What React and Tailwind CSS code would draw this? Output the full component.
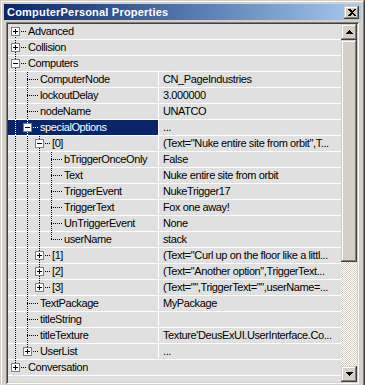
import React from 'react';

const tree = [
  { label: 'Advanced', closed: true },
  { label: 'Collision', closed: true },
  {
    label: 'Computers',
    children: [
      { label: 'ComputerNode', value: 'CN_PageIndustries' },
      { label: 'lockoutDelay', value: '3.000000' },
      { label: 'nodeName', value: 'UNATCO' },
      {
        label: 'specialOptions',
        value: '...',
        selected: true,
        children: [
          {
            label: '[0]',
            value: '(Text="Nuke entire site from orbit",T...',
            children: [
              { label: 'bTriggerOnceOnly', value: 'False' },
              { label: 'Text', value: 'Nuke entire site from orbit' },
              { label: 'TriggerEvent', value: 'NukeTrigger17' },
              { label: 'TriggerText', value: 'Fox one away!' },
              { label: 'UnTriggerEvent', value: 'None' },
              { label: 'userName', value: 'stack' },
            ],
          },
          { label: '[1]', value: '(Text="Curl up on the floor like a littl...', closed: true },
          { label: '[2]', value: '(Text="Another option",TriggerText...', closed: true },
          { label: '[3]', value: '(Text="",TriggerText="",userName=...', closed: true },
        ],
      },
      { label: 'TextPackage', value: 'MyPackage' },
      { label: 'titleString', value: '' },
      { label: 'titleTexture', value: "Texture'DeusExUI.UserInterface.Co..." },
      { label: 'UserList', value: '...', closed: true },
    ],
  },
  { label: 'Conversation', closed: true },
];

const flatten = (nodes, level = 0, cont = [], out = []) => {
  nodes.forEach((node, i) => {
    const hasNext = i < nodes.length - 1;
    out.push({ ...node, level, cont, hasNext });
    if (node.children) flatten(node.children, level + 1, [...cont, hasNext], out);
  });
  return out;
};

const rows = flatten(tree);

const TreeLines = ({ row, first }) => {
  const L = row.level;
  const w = 19 + 12 * L;
  const c = row.selected ? '#ffffff' : '#000000';
  const x = 7 + 12 * L + 0.5;
  const box = row.closed || row.children;

  return (
    <svg width={w} height={15} shapeRendering="crispEdges" className="shrink-0">
      {row.cont.map((on, a) =>
        on ? (
          <line key={a} x1={7 + 12 * a + 0.5} y1={0} x2={7 + 12 * a + 0.5} y2={15} stroke={c} strokeDasharray="1 1" />
        ) : null
      )}
      <line x1={x} y1={first ? 7 : 0} x2={x} y2={row.hasNext ? 15 : 8} stroke={c} strokeDasharray="1 1" />
      <line x1={7 + 12 * L} y1={7.5} x2={w - 1} y2={7.5} stroke={c} strokeDasharray="1 1" />
      {box && (
        <g>
          <rect x={3 + 12 * L + 0.5} y={3.5} width={8} height={8} fill="#ffffff" stroke="#808080" />
          <line x1={5 + 12 * L} y1={7.5} x2={10 + 12 * L} y2={7.5} stroke="#000000" />
          {row.closed && <line x1={x} y1={5} x2={x} y2={10} stroke="#000000" />}
        </g>
      )}
    </svg>
  );
};

const Arrow = ({ down }) => (
  <svg width="7" height="4" shapeRendering="crispEdges">
    <path d={down ? 'M0 0h7L3.5 4z' : 'M3.5 0L7 4H0z'} fill="#000" />
  </svg>
);

const raised =
  'bg-[#d4d0c8] shadow-[inset_-1px_-1px_#404040,inset_1px_1px_#d4d0c8,inset_-2px_-2px_#808080,inset_2px_2px_#ffffff]';

export default function App() {
  return (
    <div className="w-[365px] h-[385px] overflow-hidden" style={{}}>
      <div
        className={`w-[365px] h-[388px] p-[4px] flex flex-col ${raised}`}
        style={{ fontFamily: '"Liberation Sans", Arial, sans-serif' }}
      >
        <div className="h-[16px] flex items-center justify-between bg-linear-to-r from-[#0a246a] to-[#a6caf0] pl-[3px] pr-[2px]">
          <span className="text-white font-bold text-[11px] tracking-[0.2px] leading-none">
            ComputerPersonal Properties
          </span>
          <div className={`w-[15px] h-[13px] flex items-center justify-center ${raised}`}>
            <svg width="8" height="7" shapeRendering="crispEdges">
              <path d="M0 0h2l2 2 2-2h2L5 3.5 8 7H6L4 5 2 7H0l3-3.5z" fill="#000" />
            </svg>
          </div>
        </div>

        <div className="mt-[2px] mx-[2px] flex-1 p-[2px] flex bg-[#e0e0e0] shadow-[inset_1px_1px_#808080,inset_-1px_-1px_#ffffff,inset_2px_2px_#404040,inset_-2px_-2px_#d4d0c8]">
          <div className="flex-1 flex flex-col text-[11px] tracking-[-0.4px] text-black">
            {rows.map((row, i) => (
              <div key={i} className="h-[16px] flex border-b border-white">
                <div
                  className={`w-[151px] shrink-0 flex items-center border-r ${
                    row.level === 0 ? 'border-r-[#e0e0e0]' : 'border-r-white'
                  } ${row.selected ? 'bg-[#0a246a] text-white' : ''}`}
                >
                  <TreeLines row={row} first={i === 0} />
                  <span className="pl-[1px] whitespace-nowrap leading-[15px]">{row.label}</span>
                </div>
                <div className="flex-1 pl-[4px] whitespace-nowrap overflow-hidden leading-[15px]">
                  {row.value}
                </div>
              </div>
            ))}
          </div>

          <div className="w-[16px] shrink-0 flex flex-col">
            <div className={`h-[16px] flex items-center justify-center ${raised}`}>
              <Arrow />
            </div>
            <div className={`h-[222px] ${raised}`} />
            <div className="flex-1 bg-[image:repeating-conic-gradient(#d4d0c8_0%_25%,#ffffff_0%_50%)] bg-[length:2px_2px]" />
            <div className={`h-[16px] flex items-center justify-center ${raised}`}>
              <Arrow down />
            </div>
          </div>
        </div>
      </div>
    </div>
  );
}
